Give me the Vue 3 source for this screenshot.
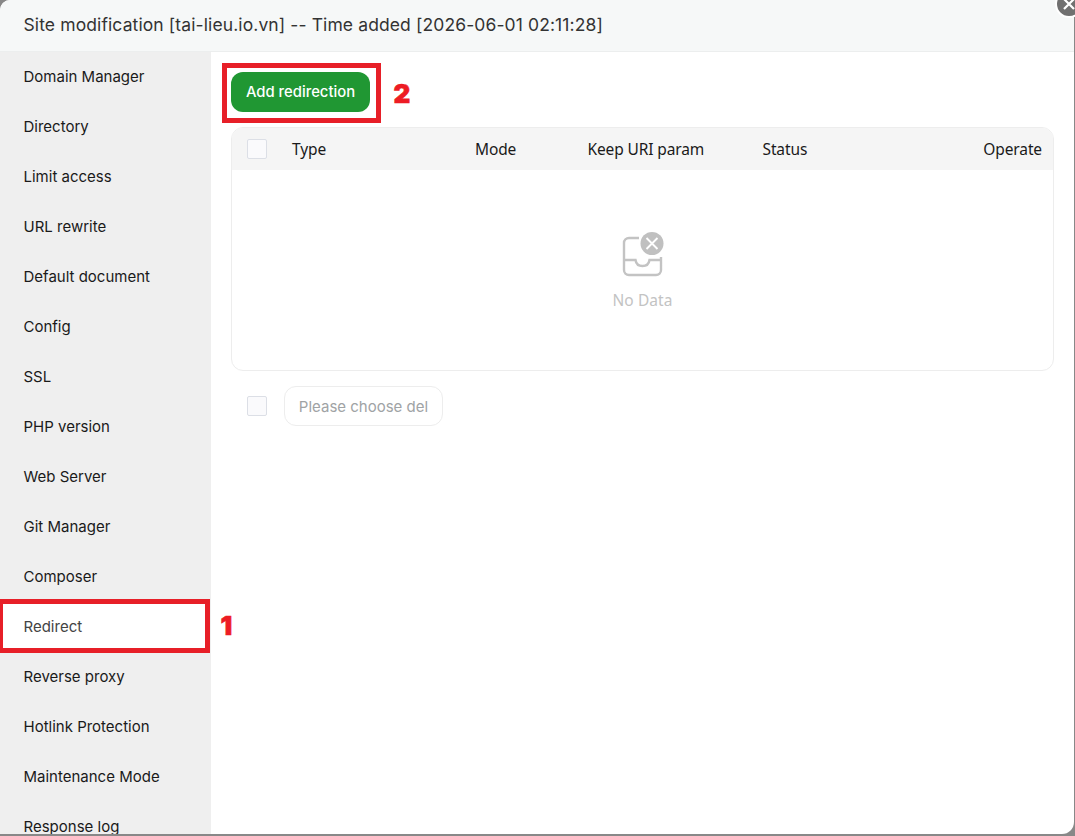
<template>
  <div class="backdrop">
    <div class="dialog">
      <header class="dialog__title">
        <span>Site modification [tai-lieu.io.vn] -- Time added [2026-06-01 02:11:28]</span>
      </header>

      <div class="dialog__body">
        <nav class="menu">
          <div
            v-for="item in menu"
            :key="item"
            class="menu__item"
            :class="{ 'menu__item--active': item === current }"
          >
            <span>{{ item }}</span>
            <b v-if="item === current" class="step step--menu">1</b>
          </div>
        </nav>

        <main class="content">
          <div class="toolbar">
            <div class="highlight">
              <button class="btn-add">Add redirection</button>
            </div>
            <b class="step">2</b>
          </div>

          <section class="table">
            <div class="table__head">
              <i class="checkbox" />
              <span class="col-type">Type</span>
              <span class="col-mode">Mode</span>
              <span class="col-keep">Keep URI param</span>
              <span class="col-status">Status</span>
              <span class="col-operate">Operate</span>
            </div>
            <div class="table__empty">
              <svg class="empty-icon" width="44" height="46" viewBox="0 0 44 46" fill="none">
                <path
                  d="M19 6H9A5 5 0 0 0 4 11V38A5 5 0 0 0 9 43H36A5 5 0 0 0 41 38V25M4 28H15.500C16 31.500 18.500 34 22.500 34S29 31.500 29.500 28H41"
                  stroke="#c3c3c3"
                  stroke-width="2.400"
                />
                <circle cx="32" cy="11.500" r="11.500" fill="#c0c0c0" />
                <path d="M26.500 6L37.500 17M37.500 6L26.500 17" stroke="#fff" stroke-width="1.900" />
              </svg>
              <span class="empty-text">No Data</span>
            </div>
          </section>

          <footer class="batch">
            <i class="checkbox" />
            <button class="btn-batch">Please choose del</button>
          </footer>
        </main>
      </div>
    </div>

    <svg class="close" width="28" height="28" viewBox="0 0 28 28">
      <circle cx="14" cy="14" r="13" fill="#707070" stroke="#fff" stroke-width="2" />
      <path d="M9 9L19 19M19 9L9 19" stroke="#fff" stroke-width="2.200" />
    </svg>
  </div>
</template>

<script setup>
const current = 'Redirect'

const menu = [
  'Domain Manager',
  'Directory',
  'Limit access',
  'URL rewrite',
  'Default document',
  'Config',
  'SSL',
  'PHP version',
  'Web Server',
  'Git Manager',
  'Composer',
  'Redirect',
  'Reverse proxy',
  'Hotlink Protection',
  'Maintenance Mode',
  'Response log',
]
</script>

<style>
body {
  margin: 0;
  overflow: hidden;
}
</style>

<style scoped>
.backdrop {
  position: relative;
  width: 1075px;
  height: 836px;
  overflow: hidden;
  background: #888;
  color: #1a1a1a;
  font-family: Inter, 'Liberation Sans', sans-serif;
  font-size: 15px;
}

.dialog {
  display: flex;
  flex-direction: column;
  width: 1074px;
  height: 834px;
  overflow: hidden;
  background: #fff;
  border-radius: 10px 12px 12px 0;
}

.dialog__title {
  display: flex;
  align-items: center;
  flex: none;
  box-sizing: border-box;
  height: 52px;
  padding: 0 23.5px 2px;
  background: #f6f8f8;
  border-bottom: 1px solid #eceeee;
  color: #333;
  font-size: 17.5px;
  letter-spacing: 0.11px;
}

.dialog__body {
  display: flex;
  flex: 1;
  min-height: 0;
}

.menu {
  flex: none;
  width: 211px;
  background: #efefef;
}

.menu__item {
  position: relative;
  display: flex;
  align-items: center;
  box-sizing: border-box;
  height: 50px;
  padding: 0 0 2px 23.5px;
}

.menu__item--active {
  width: 210px;
  height: 54px;
  margin: -3px 0 -1px;
  padding: 0 0 0 20.5px;
  background: #fff;
  border: 5px solid #e71f28;
  border-left-width: 3px;
  color: #444;
}

.content {
  flex: 1;
  min-width: 0;
  padding: 11px 20px 0 11px;
}

.toolbar {
  display: flex;
  align-items: center;
  gap: 12.5px;
}

.highlight {
  padding: 4px 6px 6px 4px;
  border: 5px solid #e71f28;
}

.btn-add {
  display: block;
  width: 139px;
  height: 40px;
  padding: 0;
  background: #209733;
  border: 0;
  border-radius: 12px;
  color: #fff;
  font: 500 14.85px/20px Inter, sans-serif;
}

.step {
  padding-top: 2px;
  color: #ed1c24;
  font: 900 26px/26px Inter, sans-serif;
  -webkit-text-stroke: 0.6px #ed1c24;
}

.step--menu {
  position: absolute;
  left: 217.5px;
  top: 7px;
}

.table {
  box-sizing: border-box;
  width: 823px;
  height: 244px;
  margin: 4px 0 0 9px;
  overflow: hidden;
  border: 1px solid #ededed;
  border-radius: 12px;
}

.table__head {
  display: flex;
  align-items: center;
  height: 42px;
  padding: 0 11px 0 15px;
  background: #f5f5f5;
  font-family: 'Noto Sans', sans-serif;
  font-size: 15.5px;
  letter-spacing: -0.12px;
}

.checkbox {
  flex: none;
  box-sizing: border-box;
  width: 20px;
  height: 20px;
  background: #fafafc;
  border: 1px solid #dcdfe6;
  border-radius: 2px;
}

.col-type {
  width: 183px;
  margin-left: 25px;
}

.col-mode {
  width: 112.5px;
}

.col-keep {
  width: 175px;
}

.col-operate {
  margin-left: auto;
}

.table__empty {
  display: flex;
  flex-direction: column;
  align-items: center;
  padding-top: 62px;
}

.empty-icon {
  margin-right: 1px;
}

.empty-text {
  margin: 11px 0 0;
  color: #c3c3c3;
  font: 15.5px/22px 'Noto Sans', sans-serif;
  letter-spacing: 0.1px;
}

.batch {
  display: flex;
  align-items: center;
  gap: 17px;
  margin: 15px 0 0 25px;
}

.btn-batch {
  box-sizing: border-box;
  width: 159px;
  height: 40px;
  padding: 0;
  background: #fff;
  border: 1px solid #ededed;
  border-radius: 12px;
  color: #a0a3a5;
  font: 15px Inter, sans-serif;
}

.close {
  position: absolute;
  top: -10px;
  left: 1055px;
}
</style>
